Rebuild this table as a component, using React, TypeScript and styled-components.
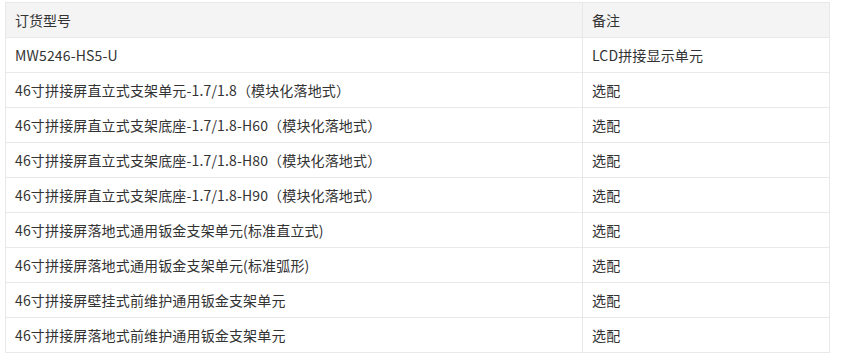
import styled, { createGlobalStyle } from "styled-components";

const GlobalStyle = createGlobalStyle`
  body {
    margin: 0;
    background: #ffffff;
    font-family: "Noto Sans CJK SC", "Noto Sans", "Liberation Sans", sans-serif;
  }
`;

const Page = styled.div`
  padding: 2px 0 0 5px;
`;

const Table = styled.table`
  width: 825px;
  border-collapse: collapse;
  table-layout: fixed;
  font-size: 14px;
  color: #333333;
`;

const HeadCell = styled.th<{ $width?: number }>`
  width: ${({ $width }) => ($width ? `${$width}px` : "auto")};
  height: 35px;
  padding: 0 9px;
  background: #f4f4f4;
  border: 1px solid #e8e8e8;
  font-weight: 400;
  text-align: left;
  box-sizing: border-box;
`;

const Cell = styled.td`
  height: 35px;
  padding: 0 9px;
  border: 1px solid #e8e8e8;
  white-space: nowrap;
  letter-spacing: 0.15px;
  box-sizing: border-box;
`;

const rows: [string, string][] = [
  ["MW5246-HS5-U", "LCD拼接显示单元"],
  ["46寸拼接屏直立式支架单元-1.7/1.8（模块化落地式）", "选配"],
  ["46寸拼接屏直立式支架底座-1.7/1.8-H60（模块化落地式）", "选配"],
  ["46寸拼接屏直立式支架底座-1.7/1.8-H80（模块化落地式）", "选配"],
  ["46寸拼接屏直立式支架底座-1.7/1.8-H90（模块化落地式）", "选配"],
  ["46寸拼接屏落地式通用钣金支架单元(标准直立式)", "选配"],
  ["46寸拼接屏落地式通用钣金支架单元(标准弧形)", "选配"],
  ["46寸拼接屏壁挂式前维护通用钣金支架单元", "选配"],
  ["46寸拼接屏落地式前维护通用钣金支架单元", "选配"],
];

export default function App() {
  return (
    <>
      <GlobalStyle />
      <Page>
        <Table>
          <thead>
            <tr>
              <HeadCell $width={577}>订货型号</HeadCell>
              <HeadCell>备注</HeadCell>
            </tr>
          </thead>
          <tbody>
            {rows.map(([model, note], i) => (
              <tr key={i}>
                <Cell>{model}</Cell>
                <Cell>{note}</Cell>
              </tr>
            ))}
          </tbody>
        </Table>
      </Page>
    </>
  );
}
